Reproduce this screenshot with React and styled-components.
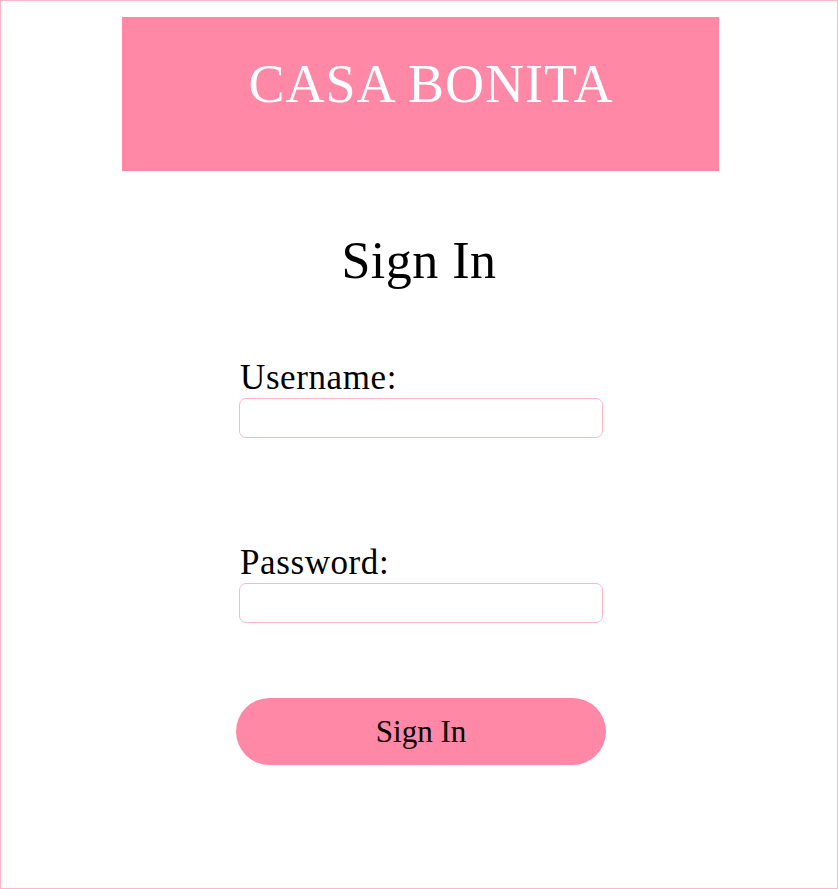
import React from "react";
import styled, { createGlobalStyle } from "styled-components";

const GlobalStyle = createGlobalStyle`
    html, body {
        margin: 0;
        padding: 0;
        background: white;
    }
    * {
        box-sizing: border-box;
    }
`

const App = () => {
    return (
        <>
            <GlobalStyle />
            <Page>
                <Banner>
                    <Brand>CASA BONITA</Brand>
                </Banner>
                <Title>Sign In</Title>
                <Form onSubmit={(e) => e.preventDefault()}>
                    <Field>
                        <Label htmlFor="username">Username:</Label>
                        <Input id="username" type="text" />
                    </Field>
                    <Field>
                        <Label htmlFor="password">Password:</Label>
                        <Input id="password" type="password" />
                    </Field>
                    <Button type="submit">Sign In</Button>
                </Form>
            </Page>
        </>
    );
}

const Page = styled.div`
    width: 838px;
    height: 889px;
    border: 1px solid #ffb6c8;
    display: flex;
    flex-direction: column;
    align-items: center;
    font-family: "Liberation Serif", "Times New Roman", serif;
`

const Banner = styled.div`
    width: 597px;
    height: 154px;
    margin: 16px 0 0 2px;
    background-color: #ff88a6;
    display: flex;
    align-items: center;
    justify-content: center;
    padding: 0 0 20px 22px;
`

const Brand = styled.h1`
    margin: 0;
    color: white;
    font-weight: normal;
    font-size: 54px;
    line-height: 60px;
    letter-spacing: 1px;
`

const Title = styled.h2`
    margin: 60px 0 0;
    font-weight: normal;
    font-size: 52px;
    line-height: 60px;
    letter-spacing: 0.5px;
    color: black;
`

const Form = styled.form`
    width: 368px;
    padding-left: 4px;
    margin-top: 67px;
    display: flex;
    flex-direction: column;
    gap: 105px;
`

const Field = styled.div`
    display: flex;
    flex-direction: column;
`

const Label = styled.label`
    font-size: 35px;
    line-height: 40px;
    letter-spacing: 0.6px;
    padding-left: 1px;
    color: black;
`

const Input = styled.input`
    width: 364px;
    height: 40px;
    border: 1px solid #ffb6c8;
    border-radius: 7px;
    outline: none;
    padding: 0 10px;
    font-family: inherit;
    font-size: 20px;
`

const Button = styled.button`
    width: 370px;
    height: 67px;
    margin-top: -30px;
    margin-left: -3px;
    border: none;
    border-radius: 34px;
    background-color: #ff88a6;
    color: black;
    font-family: "Liberation Serif", "Times New Roman", serif;
    font-size: 31px;
    cursor: pointer;
`

export default App;
